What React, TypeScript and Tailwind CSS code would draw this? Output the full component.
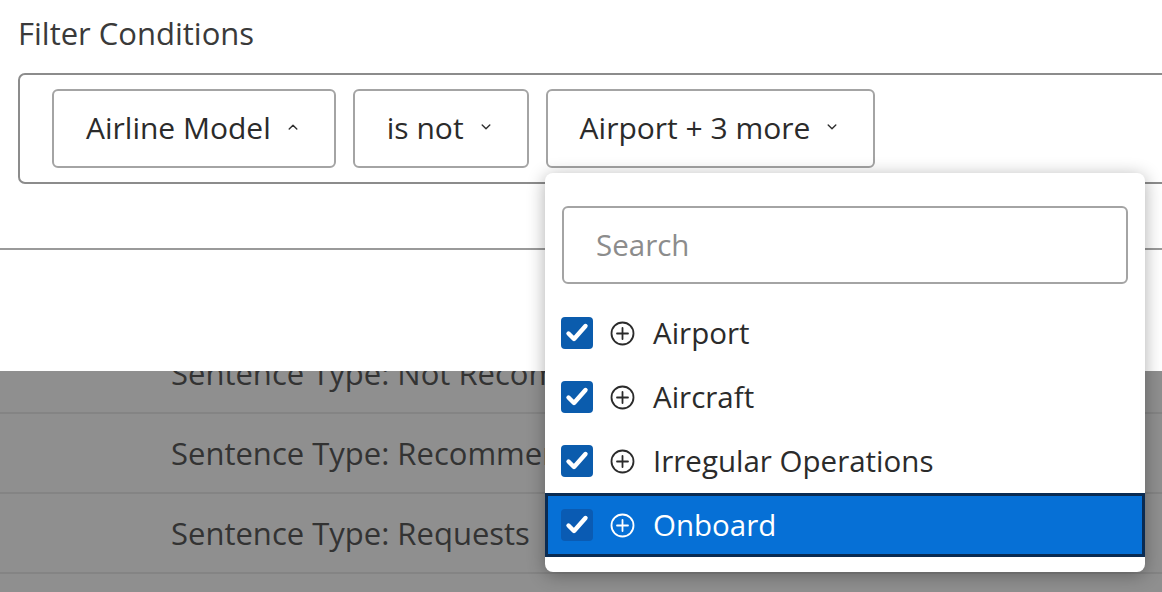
import React from "react";

const font = { fontFamily: '"Open Sans", "Noto Sans", sans-serif' };

function Chevron({ up = false }: { up?: boolean }) {
  return (
    <svg width="10" height="6" viewBox="0 0 10 6" className="shrink-0">
      <path
        d={up ? "M1.2 5L5 1.3L8.8 5" : "M1.2 1L5 4.7L8.8 1"}
        fill="none"
        stroke="#2e2e2e"
        strokeWidth="1.4"
        strokeLinecap="round"
        strokeLinejoin="round"
      />
    </svg>
  );
}

function FilterButton({ label, up = false }: { label: string; up?: boolean }) {
  return (
    <button className="flex h-[79px] items-center gap-[17px] rounded-[6px] border-2 border-[#a4a4a4] bg-white pb-[3px] pl-[32px] pr-[36px] text-[30px] text-[#2b2b2b]">
      <span>{label}</span>
      <Chevron up={up} />
    </button>
  );
}

function CheckBox({ dim = false }: { dim?: boolean }) {
  return (
    <span
      className={
        "flex h-[32px] w-[32px] shrink-0 items-center justify-center rounded-[4px] " +
        (dim ? "bg-[#0a5bb3]" : "bg-[#0b5cad]")
      }
    >
      <svg width="26" height="26" viewBox="0 0 26 26">
        <path
          d="M4.5 13.5L10 19L21.5 6"
          fill="none"
          stroke="#ffffff"
          strokeWidth="4.4"
          strokeLinecap="round"
          strokeLinejoin="round"
        />
      </svg>
    </span>
  );
}

function PlusCircle({ color }: { color: string }) {
  return (
    <svg width="25" height="25" viewBox="0 0 25 25" className="shrink-0">
      <circle cx="12.5" cy="12.5" r="11" fill="none" stroke={color} strokeWidth="1.8" />
      <path d="M12.5 7V18M7 12.5H18" stroke={color} strokeWidth="1.8" strokeLinecap="round" />
    </svg>
  );
}

const options = ["Airport", "Aircraft", "Irregular Operations", "Onboard"];
const rows = [
  "Sentence Type: Not Recommendations",
  "Sentence Type: Recommendations",
  "Sentence Type: Requests",
  "Sentence Type: Suggestions",
];

export default function App() {
  return (
    <div className="relative h-[592px] w-[1162px] overflow-hidden bg-white" style={font}>
      {/* filter panel */}
      <div className="flex h-[371px] flex-col bg-white">
        <div className="pl-[18px] pt-[13px] text-[31px] leading-[40px] text-[#3a3a3a]">
          Filter Conditions
        </div>
        <div className="ml-[18px] mt-[20px] flex h-[111px] w-[1200px] items-center gap-[17px] rounded-[7px] border-2 border-[#8c8c8c] pl-[32px]">
          <FilterButton label="Airline Model" up />
          <FilterButton label="is not" />
          <FilterButton label="Airport + 3 more" />
        </div>
        <div className="mt-[64px] h-[2px] w-full bg-[#9a9a9a]" />
      </div>

      {/* dimmed list behind the panel */}
      <div className="h-[221px] overflow-hidden bg-[#8f8f8f]">
        <div className="-mt-[37px] flex flex-col">
          {rows.map((r) => (
            <div
              key={r}
              className="flex h-[80px] items-center border-b-2 border-[#848484] pl-[171px] text-[31px] text-[#333333]"
            >
              <span className="whitespace-nowrap">{r}</span>
            </div>
          ))}
        </div>
      </div>

      {/* value picker menu */}
      <div className="absolute left-[545px] top-[173px] flex h-[399px] w-[600px] flex-col rounded-[8px] bg-white shadow-[0_3px_18px_rgba(0,0,0,0.32)]">
        <div className="mx-[17px] mt-[33px] flex h-[78px] items-center rounded-[6px] border-2 border-[#a4a4a4] pl-[32px] text-[29.5px] text-[#8c8c8c]">
          Search
        </div>
        <div className="mt-[17px] flex flex-col">
          {options.map((o) => {
            const selected = o === "Onboard";
            return (
              <div
                key={o}
                className={
                  "flex h-[64px] items-center text-[29.5px] " +
                  (selected
                    ? "border-[3px] border-[#0a2b52] bg-[#0670d6] pl-[13px] text-white"
                    : "pl-[16px] text-[#2b2b2b]")
                }
              >
                <CheckBox dim={selected} />
                <span className="ml-[17px] flex">
                  <PlusCircle color={selected ? "#ffffff" : "#2b2b2b"} />
                </span>
                <span className="ml-[18px] whitespace-nowrap">{o}</span>
              </div>
            );
          })}
        </div>
      </div>
    </div>
  );
}
